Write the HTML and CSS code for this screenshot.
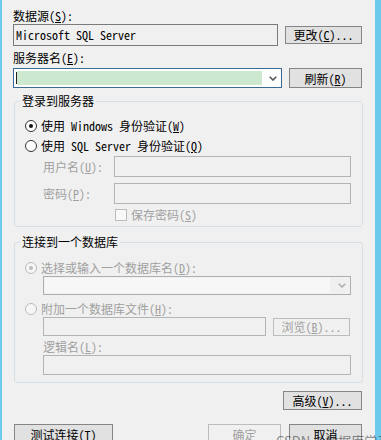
FILE: index.html
```html
<!DOCTYPE html>
<html lang="zh-CN">

<head>
  <meta charset="UTF-8" />
  <meta name="viewport" content="width=device-width, initial-scale=1.0" />
  <title>连接属性</title>
  <link rel="stylesheet" href="styles.css">
</head>

<body>
  <div class="frame">
    <div class="edge edge-left"></div>

    <div class="dialog">
      <div class="label">数据源(<u>S</u>):</div>
      <div class="row row-source">
        <div class="field field-source">Microsoft SQL Server</div>
        <button class="btn btn-change" type="button">更改(<u>C</u>)...</button>
      </div>

      <div class="label label-server">服务器名(<u>E</u>):</div>
      <div class="row row-server">
        <div class="combo combo-focus">
          <span class="caret"></span>
          <span class="selection"></span>
          <svg class="chevron" width="8" height="5" viewBox="0 0 8 5">
            <polyline points="0.7,0.7 4,4 7.3,0.7" fill="none" stroke="#555" stroke-width="1.6" />
          </svg>
        </div>
        <button class="btn btn-refresh" type="button">刷新(<u>R</u>)</button>
      </div>

      <fieldset class="group group-login">
        <legend>登录到服务器</legend>
        <div class="group-body login-body">
          <div class="option"><span class="radio checked"></span><span>使用 Windows 身份验证(<u>W</u>)</span></div>
          <div class="option option-sql"><span class="radio"></span><span>使用 SQL Server 身份验证(<u>Q</u>)</span></div>
          <div class="creds">
            <div class="label disabled">用户名(<u>U</u>):</div>
            <div class="field field-off"></div>
            <div class="label disabled">密码(<u>P</u>):</div>
            <div class="field field-off"></div>
          </div>
          <div class="option save-row disabled"><span class="check"></span><span>保存密码(<u>S</u>)</span></div>
        </div>
      </fieldset>

      <fieldset class="group group-db">
        <legend>连接到一个数据库</legend>
        <div class="group-body db-body">
          <div class="option disabled"><span class="radio checked off"></span><span>选择或输入一个数据库名(<u>D</u>):</span></div>
          <div class="combo combo-off indent">
            <span class="fill"></span>
            <svg class="chevron" width="8" height="5" viewBox="0 0 8 5">
              <polyline points="0.7,0.7 4,4 7.3,0.7" fill="none" stroke="#b0b0b0" stroke-width="1.6" />
            </svg>
          </div>
          <div class="option option-attach disabled"><span class="radio off"></span><span>附加一个数据库文件(<u>H</u>):</span></div>
          <div class="row file-row indent">
            <div class="field field-off field-file"></div>
            <button class="btn btn-off btn-browse" type="button">浏览(<u>B</u>)...</button>
          </div>
          <div class="label disabled indent label-logic">逻辑名(<u>L</u>):</div>
          <div class="field field-off indent field-logic"></div>
        </div>
      </fieldset>

      <div class="row row-advanced">
        <button class="btn btn-advanced" type="button">高级(<u>V</u>)...</button>
      </div>

      <div class="separator"></div>

      <div class="row row-actions">
        <button class="btn btn-test" type="button">测试连接(<u>T</u>)</button>
        <button class="btn btn-off btn-ok" type="button">确定</button>
        <button class="btn btn-cancel" type="button">取消</button>
      </div>
    </div>

    <div class="edge edge-right"></div>

    <span class="watermark">CSDN @数据库学习</span>
  </div>
</body>

</html>
```

FILE: styles.css
```css
* {
  box-sizing: border-box;
}

html,
body {
  margin: 0;
}

body {
  background: #f0f0f0;
  font-family: "Noto Sans Mono CJK SC", "Noto Sans CJK SC", "Liberation Mono", monospace;
  font-size: 12px;
  line-height: 14px;
  color: #000;
  overflow: hidden;
}

.frame {
  position: relative;
  display: flex;
  width: 381px;
  height: 440px;
  overflow: hidden;
}

.edge {
  background: #6ccbec;
}

.edge-left {
  width: 2px;
}

.edge-right {
  width: 6px;
}

.dialog {
  flex: 1;
  display: flex;
  flex-direction: column;
  padding: 9px 13px 0 11px;
}

u {
  text-decoration: underline;
  text-underline-offset: 1px;
}

.label {
  height: 14px;
  white-space: nowrap;
}

.disabled {
  color: #a0a0a0;
}

.row {
  display: flex;
  align-items: center;
  gap: 7px;
}

.row-source {
  margin-top: 1px;
  height: 22px;
}

.label-server {
  margin-top: 5px;
}

.row-server {
  margin-top: 3px;
  height: 20px;
}

/* campos */
.field {
  border: 1px solid #7a7a7a;
  white-space: nowrap;
}

.field-source {
  width: 265px;
  height: 22px;
  padding: 0 2px;
  line-height: 20px;
}

.field-off {
  border-color: #b2b5b7;
  height: 21px;
}

/* botones */
.btn {
  font: inherit;
  color: #000;
  padding: 0;
  height: 19px;
  line-height: 17px;
  border: 1px solid #858585;
  background: #e1e1e1;
  white-space: nowrap;
}

.btn-off {
  color: #a0a0a0;
  border-color: #bcbcbc;
  background: #f0f0f0;
}

.btn-change {
  width: 77px;
  height: 18px;
  line-height: 16px;
}

.btn-refresh {
  width: 73px;
  height: 20px;
}

/* combo */
.combo {
  display: flex;
  align-items: center;
}

.combo-focus {
  width: 269px;
  height: 20px;
  border: 1px solid #3a6b98;
  background: #fff;
  padding-left: 2px;
}

.caret {
  width: 1px;
  height: 12px;
  background: #222;
}

.selection {
  width: 245px;
  height: 14px;
  background: #cce8cf;
}

.chevron {
  display: block;
  margin-left: auto;
  margin-right: 4px;
}

.combo-off {
  height: 19px;
  margin-top: 1px;
  border: 1px solid #adb0b2;
}

.combo-off .fill {
  flex: 1;
  height: 15px;
  margin-left: 1px;
  background: #f7f7f7;
}

.combo-off .chevron {
  margin-left: 8px;
}

/* grupos */
.group {
  margin: 0 -1px 0 1px;
  padding: 0;
  min-width: 0;
  border: 1px solid #d5dfe5;
  border-radius: 3px;
}

.group legend {
  margin-left: 5px;
  padding: 0 2px;
  line-height: 14px;
}

.group-login {
  margin-top: 6px;
}

.group-db {
  margin-top: 8px;
}

.group-body {
  padding: 11px 11px 4px 10px;
}

.db-body {
  padding-top: 12px;
  padding-bottom: 7px;
}

.option {
  display: flex;
  align-items: center;
  gap: 4px;
  height: 14px;
  white-space: pre;
}

.option-sql {
  margin-top: 6px;
}

.radio {
  position: relative;
  width: 12px;
  height: 12px;
  border: 1px solid #333;
  border-radius: 50%;
  background: #fff;
}

.radio.checked::after {
  content: "";
  position: absolute;
  left: 3px;
  top: 3px;
  width: 4px;
  height: 4px;
  border-radius: 50%;
  background: #111;
}

.radio.off {
  border-color: #bcbcbc;
  background: #f6f6f6;
}

.radio.off.checked::after {
  background: #bcbcbc;
}

.check {
  width: 12px;
  height: 12px;
  border: 1px solid #bcbcbc;
  background: #f8f8f8;
}

.creds {
  display: grid;
  grid-template-columns: 71px 1fr;
  row-gap: 6px;
  align-items: center;
  margin: 3px 0 0 18px;
}

.save-row {
  margin: 4px 0 0 90px;
}

.indent {
  margin-left: 18px;
}

.option-attach {
  margin-top: 7px;
}

.file-row {
  margin-top: 1px;
}

.field-file {
  width: 223px;
  height: 19px;
}

.btn-browse {
  width: 77px;
  height: 18px;
  line-height: 16px;
}

.label-logic {
  margin-top: 4px;
}

.field-logic {
  margin-top: 1px;
  height: 20px;
}

/* pie */
.row-advanced {
  justify-content: flex-end;
  margin-top: 8px;
}

.btn-advanced {
  width: 79px;
}

.separator {
  margin-top: 6px;
  height: 1px;
  background: #a0a0a0;
}

.row-actions {
  margin-top: 8px;
  gap: 8px;
}

.row-actions .btn {
  height: 20px;
  width: 73px;
}

.row-actions .btn-test {
  width: 99px;
  margin-left: 1px;
}

.btn-ok {
  margin-left: auto;
}

.watermark {
  position: absolute;
  left: 276px;
  top: 434px;
  font-family: "Noto Sans CJK SC", sans-serif;
  font-size: 13px;
  color: rgba(40, 40, 40, 0.55);
  white-space: nowrap;
}
```
